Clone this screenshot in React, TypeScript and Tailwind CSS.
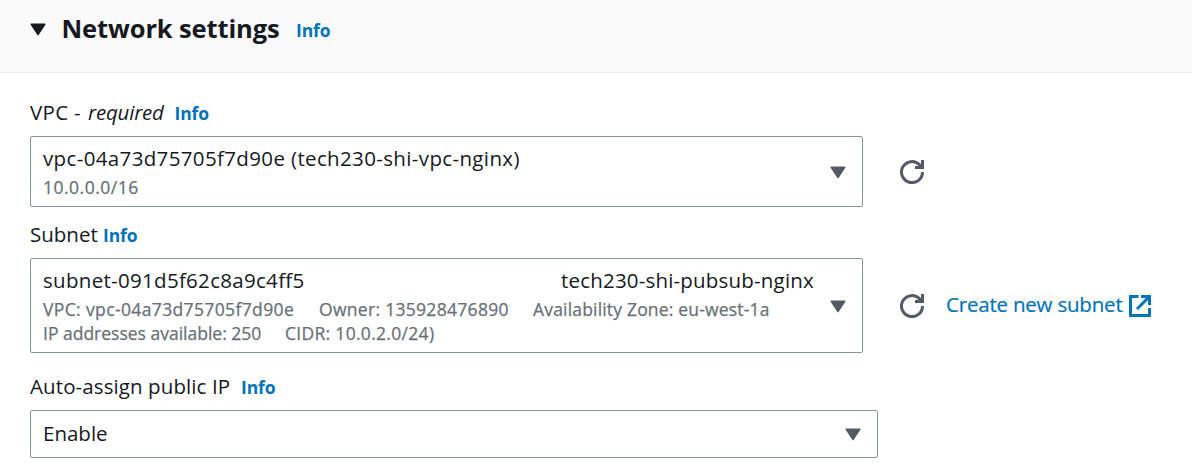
import React from "react";

function Caret({ className = "" }: { className?: string }) {
  return (
    <svg width="16" height="13" viewBox="0 0 16 13" className={className} fill="currentColor" stroke="currentColor" strokeWidth="1.5" strokeLinejoin="round">
      <path d="M1.25 1.25H14.75L8 11.5Z" />
    </svg>
  );
}

function Refresh() {
  return (
    <svg width="24" height="24" viewBox="0 0 24 24" fill="none" stroke="#545b64" strokeWidth="3" className="block shrink-0">
      <path d="M22.5 12A10.5 10.5 0 1 1 19.4 4.6L22 7.2" />
      <path d="M22.5 0V7.5H15" />
    </svg>
  );
}

function External() {
  return (
    <svg width="22" height="22" viewBox="0 0 22 22" fill="none" stroke="#0073bb" strokeWidth="3" className="block shrink-0">
      <path d="M9.5 1.5H1.5V20.5H20.5V13" />
      <path d="M12 1.5H20.5V10M20 2L8 14" />
    </svg>
  );
}

function Info({ className = "" }: { className?: string }) {
  return <a className={`text-[17.5px] font-bold tracking-[-0.1px] text-[#0073bb] ${className}`}>Info</a>;
}

export default function App() {
  return (
    <main className="h-[474px] w-[1192px] overflow-hidden whitespace-nowrap bg-white font-['Open_Sans',sans-serif] text-[20.5px] leading-6 text-[#16191f]">
      <header className="flex h-[73px] items-baseline border-b border-[#eaeded] bg-[#fafafa] pl-[30px] pt-3">
        <Caret className="mr-[15.5px] mt-[10.5px] self-start" />
        <h2 className="w-[234.5px] text-[25.5px] font-bold leading-8 tracking-[-0.12px]">Network settings</h2>
        <Info className="-translate-y-px" />
      </header>
      <section className="pl-[30px] pt-[27px]">
        <div className="flex h-6 items-baseline">
          <span className="w-[58px] tracking-[0.3px]">VPC -</span>
          <i className="w-[86.5px] tracking-[-0.2px]">required</i>
          <Info />
        </div>
        <div className="mt-3 flex items-center">
          <div className="flex h-[71px] w-[833px] items-center justify-between rounded-[2px] border border-[#879596] pl-3 pr-4 text-[#545b64]">
            <div className="pt-px">
              <div className="tracking-[0.36px] text-[#16191f]">vpc-04a73d75705f7d90e (tech230-shi-vpc-nginx)</div>
              <div className="mt-[5px] text-[17.5px] tracking-[0.5px] text-[#687078] [-webkit-text-stroke:0.25px_#687078]">10.0.0.0/16</div>
            </div>
            <Caret className="mt-px" />
          </div>
          <div className="ml-[37px]"><Refresh /></div>
        </div>
        <div className="mt-[15px] flex h-6 items-baseline">
          <span className="w-[73px]">Subnet</span>
          <Info />
        </div>
        <div className="mt-3 flex items-center">
          <div className="flex h-[95px] w-[833px] items-center justify-between rounded-[2px] border border-[#879596] pl-3 pr-4 text-[#545b64]">
            <div className="pt-0.5 text-[17.5px] text-[#687078]">
              <div className="mb-[5px] flex text-[20.5px] text-[#16191f]">
                <span className="w-[518px] tracking-[0.3px]">subnet-091d5f62c8a9c4ff5</span>
                <span className="tracking-[0.19px]">tech230-shi-pubsub-nginx</span>
              </div>
              <div className="flex [-webkit-text-stroke:0.25px_#687078]">
                <span className="w-[276px] tracking-[0.37px]">VPC: vpc-04a73d75705f7d90e</span>
                <span className="w-[214px] tracking-[0.3px]">Owner: 135928476890</span>
                <span className="tracking-[0.18px]">Availability Zone: eu-west-1a</span>
              </div>
              <div className="flex [-webkit-text-stroke:0.25px_#687078]">
                <span className="w-[242px]">IP addresses available: 250</span>
                <span className="tracking-[0.3px]">CIDR: 10.0.2.0/24)</span>
              </div>
            </div>
            <Caret className="mt-px" />
          </div>
          <div className="ml-[37px]"><Refresh /></div>
          <a className="ml-[22px] flex items-center text-[#0073bb]">
            <span className="mb-[3px] w-[183px] tracking-[-0.2px] [-webkit-text-stroke:0.2px_#0073bb]">Create new subnet</span>
            <External />
          </a>
        </div>
        <div className="mt-[21px] flex h-6 items-baseline">
          <span className="w-[211px] tracking-[0.1px]">Auto-assign public IP</span>
          <Info />
        </div>
        <div className="mt-3 flex h-12 w-[848px] items-center justify-between rounded-[2px] border border-[#879596] pl-3 pr-4 text-[#545b64]">
          <span className="mb-[3px] text-[#16191f]">Enable</span>
          <Caret />
        </div>
      </section>
    </main>
  );
}
